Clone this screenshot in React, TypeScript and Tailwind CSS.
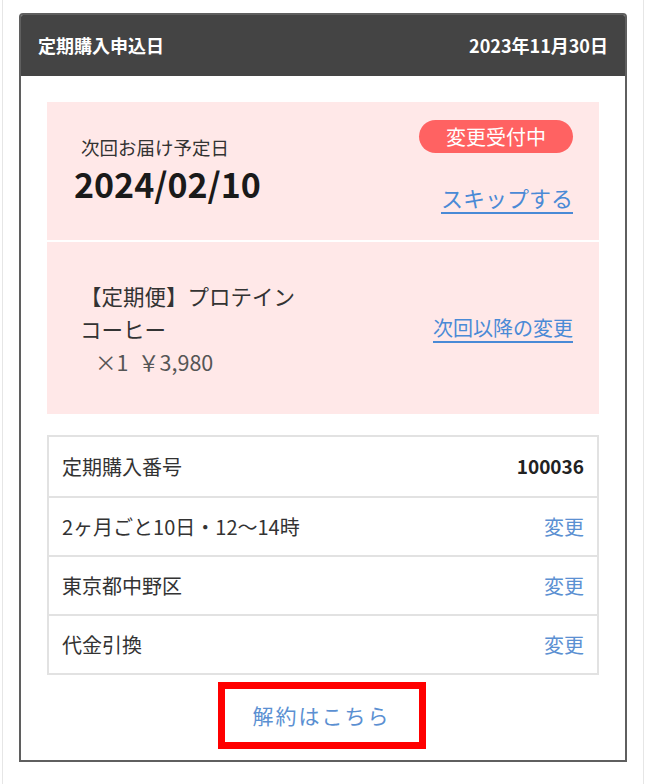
import React from "react";

const font = { fontFamily: '"Noto Sans CJK JP", "Noto Sans", sans-serif' };

const rows: { label: string; value: string; link?: boolean }[] = [
  { label: "定期購入番号", value: "100036" },
  { label: "2ヶ月ごと10日・12〜14時", value: "変更", link: true },
  { label: "東京都中野区", value: "変更", link: true },
  { label: "代金引換", value: "変更", link: true },
];

export default function App() {
  return (
    <div className="min-h-[784px] w-full bg-white" style={font}>
      <div className="ml-[2px] min-h-[784px] w-[642px] border-x border-[#e6e6e6] pt-[13px]">
        <div className="ml-[16px] w-[608px] overflow-hidden rounded-t-[4px] border-2 border-[#5f5f5f]">
          {/* header */}
          <div className="flex h-[61px] items-center justify-between bg-[#444444] px-[17px] text-[18px] font-bold text-white">
            <span>定期購入申込日</span>
            <span>2023年11月30日</span>
          </div>

          <div className="px-[26px] pt-[26px] pb-[11px]">
            {/* next delivery */}
            <div className="bg-[#ffe8e8]">
              <div className="flex h-[138px] justify-between pl-[27px] pr-[26px] pt-[18px]">
                <div className="flex flex-col">
                  <span className="ml-[7px] mt-[16px] text-[18.5px] leading-[22px] text-[#333]">
                    次回お届け予定日
                  </span>
                  <span className="mt-[6px] text-[34px] font-bold leading-[40px] text-[#1a1a1a]">
                    2024/02/10
                  </span>
                </div>
                <div className="flex flex-col items-end">
                  <span className="flex h-[33px] w-[154px] items-center justify-center rounded-full bg-[#ff6262] text-[20px] text-white">
                    変更受付中
                  </span>
                  <a className="mt-[31px] text-[22px] leading-[26px] text-[#4a8ad6] underline underline-offset-[5px]">
                    スキップする
                  </a>
                </div>
              </div>
              <div className="h-[2px] bg-white" />
              <div className="flex h-[172px] items-center justify-between pl-[33px] pr-[26px]">
                <div className="flex flex-col text-[21.5px] leading-[33px] text-[#333]">
                  <span>【定期便】プロテイン</span>
                  <span>コーヒー</span>
                  <span className="pl-[15px] text-[#555]">×1&nbsp;&nbsp;￥3,980</span>
                </div>
                <a className="text-[20px] leading-[26px] text-[#4a8ad6] underline underline-offset-[5px]">
                  次回以降の変更
                </a>
              </div>
            </div>

            {/* details table */}
            <div className="mt-[21px] border-2 border-[#e2e2e2]">
              {rows.map((r, i) => (
                <div
                  key={r.label}
                  className={`flex h-[59px] items-center justify-between px-[13px] text-[20px] ${
                    i > 0 ? "border-t-2 border-[#e2e2e2]" : ""
                  }`}
                >
                  <span className="text-[#333]">{r.label}</span>
                  {r.link ? (
                    <a className="text-[#5b90d2]">{r.value}</a>
                  ) : (
                    <span className="text-[19px] font-bold text-[#222]">{r.value}</span>
                  )}
                </div>
              ))}
            </div>

            {/* cancel */}
            <div className="mt-[7px] flex justify-center">
              <div className="ml-[-3px] flex h-[67px] w-[208px] items-center justify-center border-[7px] border-[#ff0000]">
                <a className="text-[21px] tracking-[2px] text-[#5b90d2]">解約はこちら</a>
              </div>
            </div>
          </div>
        </div>
      </div>
    </div>
  );
}
